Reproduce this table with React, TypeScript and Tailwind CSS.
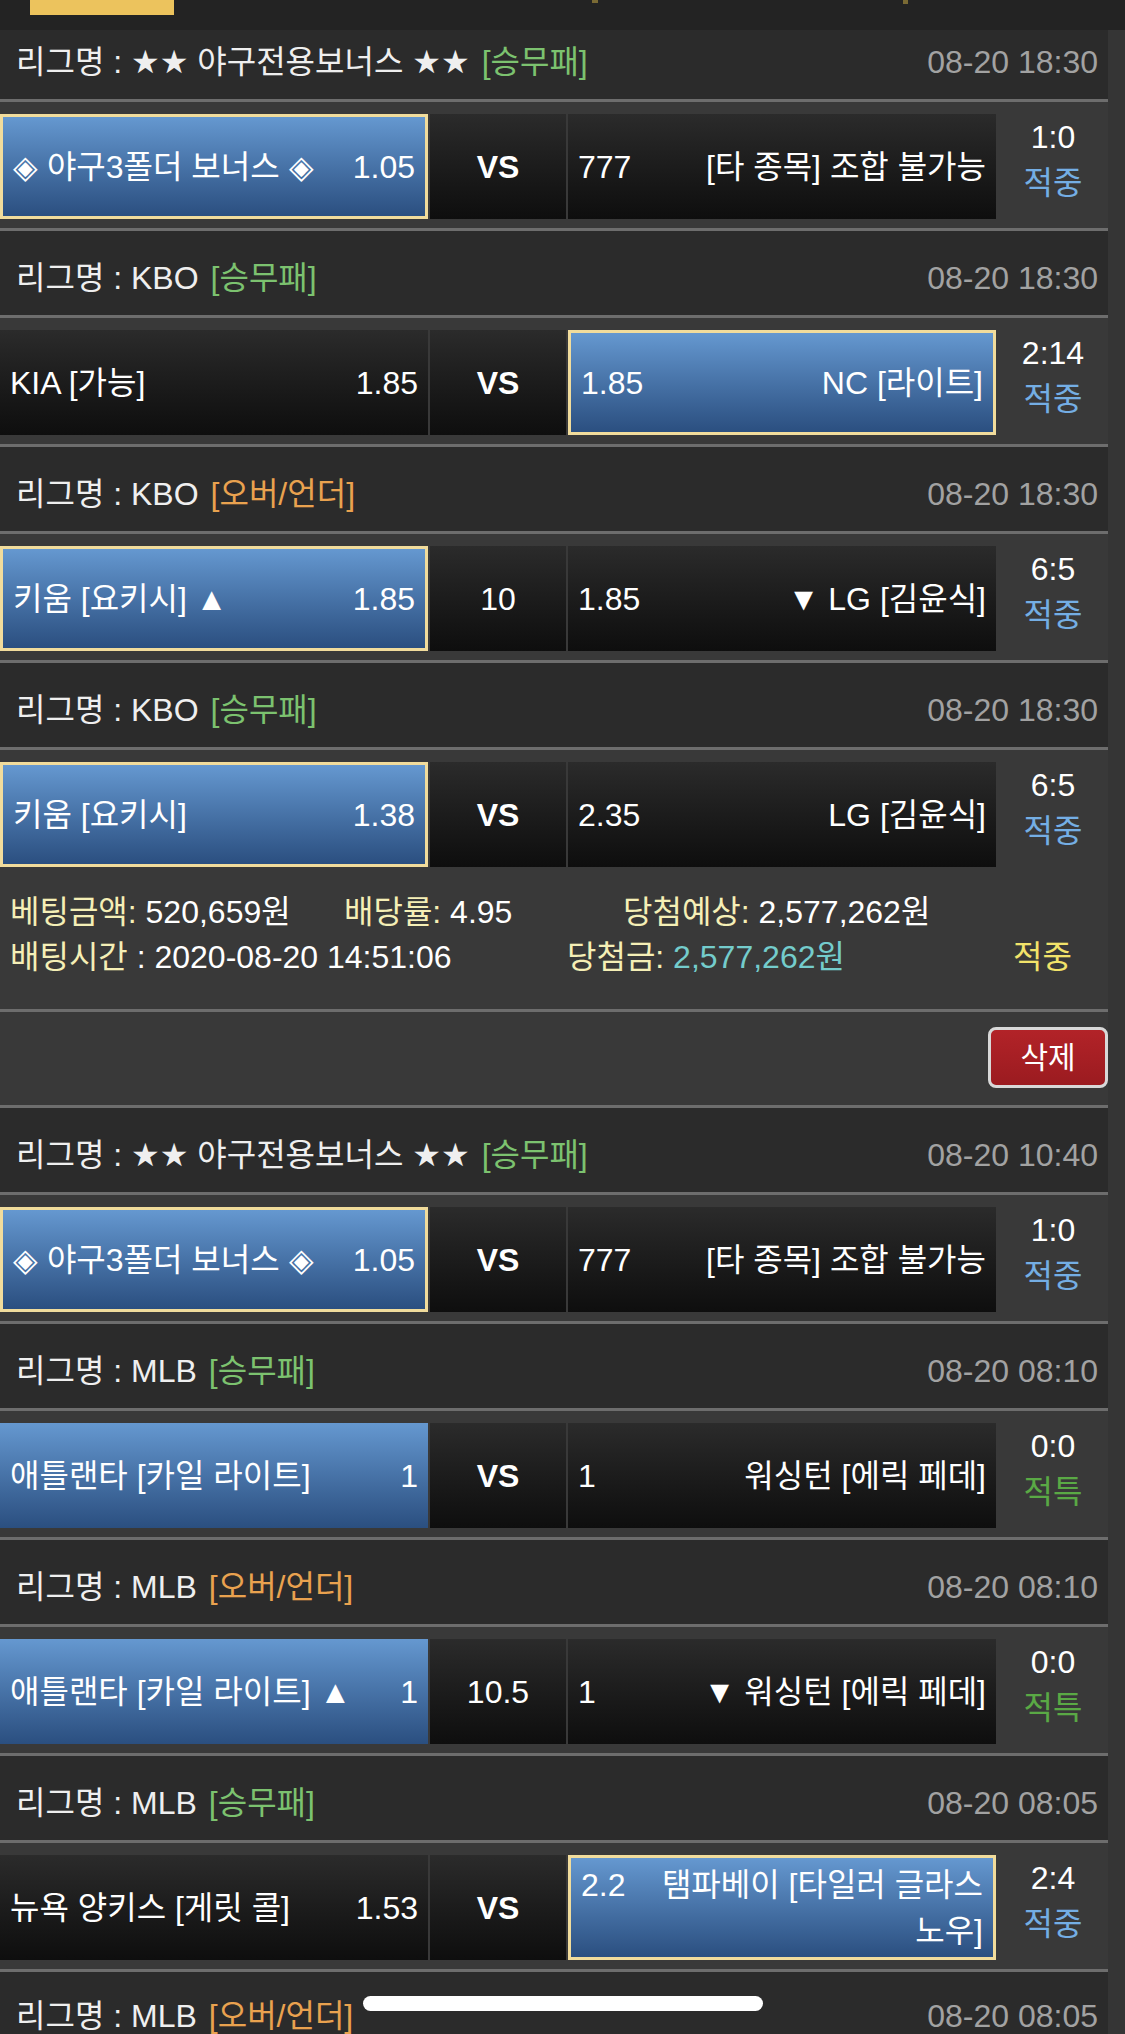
import React from "react";

type Sel = "home" | "away" | "homePlain";
type Game = {
  league: string;
  type: "승무패" | "오버/언더";
  time: string;
  home: string;
  homeOdds: string;
  mid: string;
  away: string;
  awayOdds: string;
  score: string;
  result: "적중" | "적특";
  sel: Sel;
};

const bonus = (time: string): Game => ({
  league: "★★ 야구전용보너스 ★★",
  type: "승무패",
  time,
  home: "◈ 야구3폴더 보너스 ◈",
  homeOdds: "1.05",
  mid: "VS",
  away: "[타 종목] 조합 불가능",
  awayOdds: "777",
  score: "1:0",
  result: "적중",
  sel: "home",
});

const group1: Game[] = [
  bonus("08-20 18:30"),
  {
    league: "KBO",
    type: "승무패",
    time: "08-20 18:30",
    home: "KIA [가능]",
    homeOdds: "1.85",
    mid: "VS",
    away: "NC [라이트]",
    awayOdds: "1.85",
    score: "2:14",
    result: "적중",
    sel: "away",
  },
  {
    league: "KBO",
    type: "오버/언더",
    time: "08-20 18:30",
    home: "키움 [요키시] ▲",
    homeOdds: "1.85",
    mid: "10",
    away: "▼ LG [김윤식]",
    awayOdds: "1.85",
    score: "6:5",
    result: "적중",
    sel: "home",
  },
  {
    league: "KBO",
    type: "승무패",
    time: "08-20 18:30",
    home: "키움 [요키시]",
    homeOdds: "1.38",
    mid: "VS",
    away: "LG [김윤식]",
    awayOdds: "2.35",
    score: "6:5",
    result: "적중",
    sel: "home",
  },
];

const group2: Game[] = [
  bonus("08-20 10:40"),
  {
    league: "MLB",
    type: "승무패",
    time: "08-20 08:10",
    home: "애틀랜타 [카일 라이트]",
    homeOdds: "1",
    mid: "VS",
    away: "워싱턴 [에릭 페데]",
    awayOdds: "1",
    score: "0:0",
    result: "적특",
    sel: "homePlain",
  },
  {
    league: "MLB",
    type: "오버/언더",
    time: "08-20 08:10",
    home: "애틀랜타 [카일 라이트] ▲",
    homeOdds: "1",
    mid: "10.5",
    away: "▼ 워싱턴 [에릭 페데]",
    awayOdds: "1",
    score: "0:0",
    result: "적특",
    sel: "homePlain",
  },
  {
    league: "MLB",
    type: "승무패",
    time: "08-20 08:05",
    home: "뉴욕 양키스 [게릿 콜]",
    homeOdds: "1.53",
    mid: "VS",
    away: "탬파베이 [타일러 글라스 노우]",
    awayOdds: "2.2",
    score: "2:4",
    result: "적중",
    sel: "away",
  },
];

const Line = () => <div className="h-[3px] bg-[#6d6d6d]" />;

function Stars({ text }: { text: string }) {
  const parts = text.split(/(★+)/);
  return (
    <>
      {parts.map((p, i) =>
        p.startsWith("★") ? (
          <span key={i} className="font-['DejaVu_Sans',sans-serif]">
            {p}
          </span>
        ) : (
          <React.Fragment key={i}>{p}</React.Fragment>
        )
      )}
    </>
  );
}

function HeaderText({ league, type, time }: { league: string; type: string; time: string }) {
  return (
    <>
      <div className="whitespace-nowrap">
        <span className="text-[#efefef]">
          리그명 : <Stars text={league} />
        </span>
        <span className={type === "승무패" ? "ml-[12px] text-[#7cc26f]" : "ml-[12px] text-[#e9a24f]"}>[{type}]</span>
      </div>
      <span className="text-[#a2a2a2]">{time}</span>
    </>
  );
}

function LeagueHeader(props: { league: string; type: string; time: string }) {
  return (
    <div className="flex h-[84px] items-center justify-between bg-[#2b2b2b] pl-[16px] pr-[10px] pt-[9px] leading-[40px]">
      <HeaderText {...props} />
    </div>
  );
}

const blueSel =
  "bg-linear-to-b from-[#6598d0] to-[#2b4f80] border-[3px] border-[#f1dc9c] px-[10px]";
const bluePlain = "bg-linear-to-b from-[#6598d0] to-[#2b4f80] px-[10px]";
const dark = "bg-linear-to-b from-[#2b2b2b] to-[#0e0e0e] px-[10px]";

function MatchRow({ g }: { g: Game }) {
  const homeCls = g.sel === "home" ? blueSel : g.sel === "homePlain" ? bluePlain : dark;
  const awayCls = g.sel === "away" ? blueSel : dark;
  return (
    <div className="h-[126px] bg-[#393939] pt-[12px]">
      <div className="grid h-[105px] grid-cols-[428px_136px_428px_1fr] gap-x-[2px] text-white">
        <div className={`flex items-center ${homeCls}`}>
          <span className="flex-1 whitespace-nowrap">{g.home}</span>
          <span className="shrink-0">{g.homeOdds}</span>
        </div>
        <div className={`flex items-center justify-center ${dark}`}>
          {g.mid === "VS" ? (
            <span className="text-[32px] font-bold">VS</span>
          ) : (
            <span>{g.mid}</span>
          )}
        </div>
        <div className={`flex items-center ${awayCls}`}>
          <div className="flex w-full items-start leading-[46px]">
            <span className="w-[80px] shrink-0">{g.awayOdds}</span>
            <span className="flex-1 text-right">{g.away}</span>
          </div>
        </div>
        <div className="flex flex-col items-center leading-[46px]">
          <span>{g.score}</span>
          <span className={g.result === "적중" ? "text-[#74aee4]" : "text-[#5aa945]"}>{g.result}</span>
        </div>
      </div>
    </div>
  );
}

function Block({ g, last }: { g: Game; last?: boolean }) {
  return (
    <>
      <LeagueHeader league={g.league} type={g.type} time={g.time} />
      <Line />
      <MatchRow g={g} />
      {!last && <Line />}
    </>
  );
}

const L = ({ children }: { children: React.ReactNode }) => (
  <span className="text-[#f5efb6]">{children}</span>
);

export default function App() {
  return (
    <div className="relative h-[2034px] w-[1125px] overflow-hidden bg-[#353535] font-['Liberation_Sans','Noto_Sans_CJK_KR',sans-serif] text-[32px] text-white">
      <div className="w-[1108px] pt-[15px]">
        {group1.map((g, i) => (
          <Block key={i} g={g} last={i === group1.length - 1} />
        ))}
        <div className="bg-[#393939] pb-[29px] pl-[10px] pt-[14px] leading-[45px]">
          <div className="flex whitespace-nowrap">
            <span className="w-[334px]">
              <L>베팅금액:</L> 520,659원
            </span>
            <span className="w-[279px]">
              <L>배당률:</L> 4.95
            </span>
            <span>
              <L>당첨예상:</L> 2,577,262원
            </span>
          </div>
          <div className="flex whitespace-nowrap">
            <span className="w-[557px]">
              <L>배팅시간</L> : 2020-08-20 14:51:06
            </span>
            <span className="w-[446px]">
              <L>당첨금:</L> <span className="text-[#74cccc]">2,577,262원</span>
            </span>
            <span className="text-[#f2e36a]">적중</span>
          </div>
        </div>
        <Line />
        <div className="flex h-[93px] items-start justify-end bg-[#393939] pt-[15px]">
          <button className="flex h-[61px] w-[120px] items-center justify-center rounded-[8px] border-[3px] border-[#d8d8d8] bg-linear-to-b from-[#b22328] to-[#9b1b20] text-[30px] text-white">
            삭제
          </button>
        </div>
        <Line />
        {group2.map((g, i) => (
          <Block key={i} g={g} />
        ))}
        <div className="flex h-[62px] items-start justify-between bg-[#2b2b2b] pl-[16px] pr-[10px] pt-[27px] leading-[34px]">
          <HeaderText league="MLB" type="오버/언더" time="08-20 08:05" />
        </div>
      </div>

      <div className="absolute left-0 top-0 flex h-[30px] w-full items-start bg-[#232323] pl-[30px]">
        <div className="h-[15px] w-[144px] bg-[#ecc35d]" />
        <div className="ml-[418px] h-[3px] w-[6px] bg-[#7a6a34]" />
        <div className="ml-[305px] h-[4px] w-[5px] bg-[#7a6a34]" />
      </div>

      <div className="absolute left-[363px] top-[1996px] h-[15px] w-[400px] rounded-full bg-white" />
    </div>
  );
}
